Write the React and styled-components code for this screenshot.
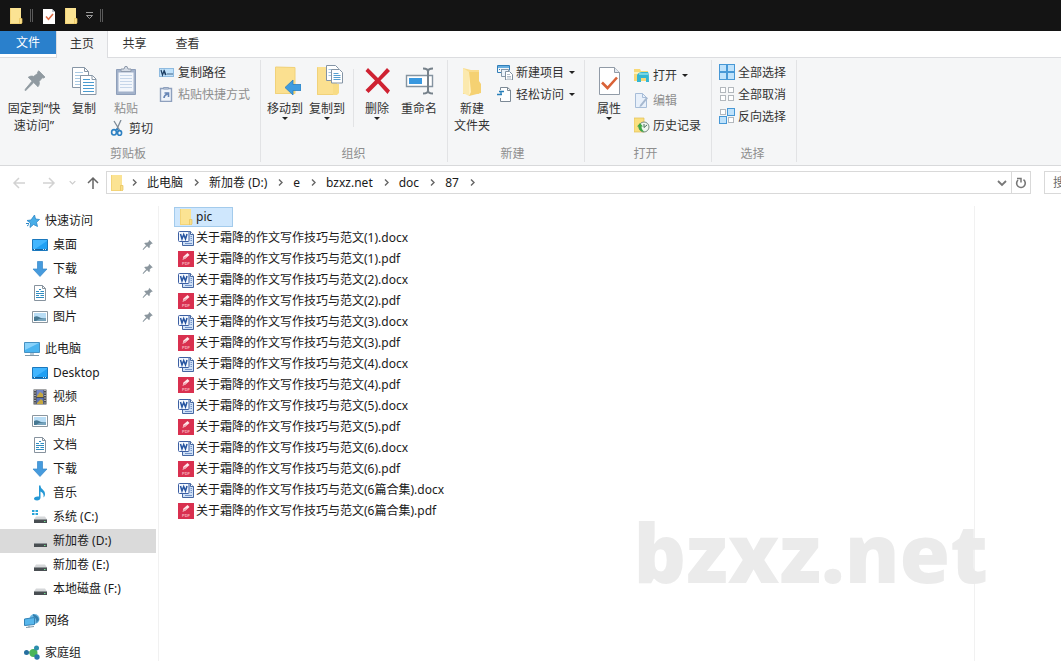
import React from "react";
import styled, { createGlobalStyle, css } from "styled-components";

const GlobalStyle = createGlobalStyle`
  * { box-sizing: border-box; }
  body {
    margin: 0;
    background: #fff;
    color: #1a1a1a;
    font-family: "Noto Sans", "Noto Sans CJK SC", sans-serif;
    font-size: 12px;
    line-height: 17px;
  }
  button, input { font: inherit; color: inherit; }
  svg { display: block; flex: none; }
  ul, ol { list-style: none; margin: 0; padding: 0; }
`;

const resetButton = css`
  border: 0;
  margin: 0;
  padding: 0;
  background: none;
  cursor: default;
  white-space: nowrap;
`;

const Window = styled.div`
  display: flex;
  flex-direction: column;
  height: 100vh;
  overflow: hidden;
`;

const TitleBar = styled.header`
  display: flex;
  align-items: center;
  height: 31px;
  padding-left: 8px;
  background: #141414;
  flex: none;
`;

const TitleButton = styled.button`
  ${resetButton}
  display: flex;
  justify-content: center;
  width: ${(p) => p.$width || 22}px;
`;

const TitleDivider = styled.span`
  width: 3px;
  height: 13px;
  border: solid #5a5a5a;
  border-width: 0 1px;
  margin: 0 ${(p) => p.$after || 0}px 0 6px;
`;

const Tabs = styled.nav`
  display: flex;
  height: 27px;
  border-bottom: 1px solid #dcdde0;
  flex: none;
`;

const Tab = styled.button`
  ${resetButton}
  width: 53px;
  height: 25px;
  color: #333;
  ${(p) =>
    p.$active &&
    css`
      width: 52px;
      height: 27px;
      padding-bottom: 2px;
      background: #f5f6f7;
      border: solid #dcdde0;
      border-width: 0 1px;
    `}
  ${(p) =>
    p.$file &&
    css`
      width: 56px;
      height: 23px;
      background: #2a80cc;
      color: #fff;
    `}
`;

const Ribbon = styled.section`
  display: flex;
  background: #f5f6f7;
  border-bottom: 1px solid #d8d9db;
  padding: 2px 0 3px;
  flex: none;
`;

const Group = styled.section`
  display: flex;
  flex-direction: column;
  border-right: 1px solid #e2e3e5;
  padding: 1px ${(p) => p.$right || 0}px 0 ${(p) => p.$left || 0}px;
`;

const GroupBody = styled.div`
  display: flex;
  align-items: flex-start;
  min-height: 85px;
`;

const GroupLabel = styled.div`
  text-align: center;
  line-height: 16px;
  color: #8e8e8e;
`;

const BigButton = styled.button`
  ${resetButton}
  display: flex;
  flex-direction: column;
  align-items: center;
  width: ${(p) => p.$width}px;
  padding-top: 4px;
  color: ${(p) => (p.$muted ? "#8e8e8e" : "#333")};
`;

const BigLabel = styled.span`
  margin-top: 3px;
  text-align: center;
`;

const Column = styled.div`
  display: flex;
  flex-direction: column;
  align-items: flex-start;
  gap: ${(p) => p.$gap || 0}px;
  padding: ${(p) => p.$top || 0}px 0 0 ${(p) => p.$left || 0}px;
`;

const SmallButton = styled.button`
  ${resetButton}
  display: flex;
  align-items: center;
  gap: 3px;
  height: 22px;
  color: ${(p) => (p.$muted ? "#8e8e8e" : "#333")};
`;

const Caret = styled.span`
  border: 3px solid transparent;
  border-top-color: #222;
  border-bottom: 0;
  margin-left: ${(p) => p.$left || 0}px;
`;

const InnerDivider = styled.span`
  width: 1px;
  height: 58px;
  margin: 8px 5px 0;
  background: #e2e3e5;
`;

const AddressRow = styled.div`
  display: flex;
  align-items: center;
  height: 33px;
  flex: none;
`;

const NavButton = styled.button`
  ${resetButton}
  display: flex;
  justify-content: center;
  width: ${(p) => p.$width}px;
`;

const NavButtons = styled.div`
  display: flex;
  align-items: center;
  width: 106px;
  padding-left: 4px;
`;

const AddressBox = styled.div`
  display: flex;
  align-items: center;
  flex: 1;
  height: 23px;
  border: 1px solid #d9d9d9;
  padding-left: 2px;
`;

const Crumbs = styled.ol`
  display: flex;
  flex: 1;
  padding-left: 4px;
`;

const Crumb = styled.li`
  display: flex;
  align-items: center;
`;

const CrumbLink = styled.a`
  padding: 0 8px 0 7px;
  color: #1a1a1a;
  text-decoration: none;
`;

const RefreshButton = styled(NavButton)`
  align-items: center;
  height: 21px;
  margin-left: 3px;
  border-left: 1px solid #d9d9d9;
`;

const Search = styled.input`
  width: 17px;
  height: 23px;
  margin-left: 13px;
  padding: 0 0 0 8px;
  border: solid #d9d9d9;
  border-width: 1px 0 1px 1px;
  border-radius: 0;
  outline: 0;
  &::placeholder { color: #6d6d6d; opacity: 1; }
`;

const Main = styled.main`
  position: relative;
  display: flex;
  flex: 1;
  min-height: 0;
  padding-top: 7px;
`;

const Sidebar = styled.nav`
  width: 159px;
  padding: 3px 2px 0 0;
  border-right: 1px solid #f1f1f1;
  flex: none;
`;

const TreeSection = styled.ul`
  margin-bottom: 8px;
`;

const TreeItem = styled.a`
  display: flex;
  align-items: center;
  gap: 5px;
  height: 24px;
  padding: 0 0 1px ${(p) => (p.$child ? 32 : 24)}px;
  background: ${(p) => (p.$selected ? "#dadada" : "transparent")};
  color: #1a1a1a;
  text-decoration: none;
  white-space: nowrap;
`;

const TreeText = styled.span`
  flex: 1;
`;

const Files = styled.ul`
  flex: 1;
  padding: 1px 0 0 15px;
`;

const FileRow = styled.li`
  height: 21px;
`;

const FileLink = styled.a`
  display: inline-flex;
  align-items: center;
  gap: 2px;
  height: 20px;
  padding: 0 20px 0 3px;
  border: 1px solid ${(p) => (p.$selected ? "#a3cbec" : "transparent")};
  background: ${(p) => (p.$selected ? "#cfe7fd" : "transparent")};
  color: #1a1a1a;
  line-height: 16px;
  text-decoration: none;
  white-space: nowrap;
`;

const Preview = styled.aside`
  width: 87px;
  border-left: 1px solid #f1f1f1;
  flex: none;
`;

const Watermark = styled.div`
  position: absolute;
  right: 73px;
  bottom: 60px;
  font-family: "Open Sans", sans-serif;
  font-weight: 800;
  font-size: 82px;
  line-height: 100px;
  color: #ebebeb;
  pointer-events: none;
`;

/* ---------- icons ---------- */

const Icon = ({ size = 16, box, children }) => (
  <svg width={size} height={size} viewBox={`0 0 ${box || size} ${box || size}`} fill="none" aria-hidden="true">
    {children}
  </svg>
);

const FolderIcon = () => (
  <Icon>
    <path d="M2 0h11v16H2z" fill="#fbe393" />
    <path d="M2 0h1v16H2zM2 15h9v1H2z" fill="#f3d478" />
    <path d="M11.500 10.500H14V15l-1 1h-1.500z" fill="#f9df8a" stroke="#e6c25a" strokeWidth=".7" />
  </Icon>
);

const CheckPageIcon = () => (
  <Icon>
    <path d="M2 1h9l3 3v12H2z" fill="#fff" />
    <path d="M11 1v3h3z" fill="#bfc6cf" />
    <path d="m5 8.500 2.500 2.700L12 6" stroke="#dd6b44" strokeWidth="1.600" />
  </Icon>
);

const QuickMenuIcon = () => (
  <Icon size={9}>
    <path d="M1 1.500h7M1.500 4.500h6l-3 3z" stroke="#aaa" strokeWidth=".9" />
  </Icon>
);

const pinPath =
  "M20.500 3.500 28 11l-1.200 1.300-1.900-.4-4 4.600c.6 2.400.2 4.600-1.400 6.400l-5.200-5.100L5 27l-1.300.4.3-1.500 8.300-9.900-4.700-4.700c2-1.500 4.400-1.800 6.500-1l5.200-3.800-.3-1.700z";

const BigPinIcon = () => (
  <Icon size={32}>
    <path d={pinPath} transform="translate(4 3) scale(.82)" fill="#909aa1" stroke="#909aa1" />
  </Icon>
);

const PinIcon = () => (
  <Icon box={32}>
    <path d={pinPath} transform="translate(3 4) scale(.78)" fill="#8b969e" stroke="#8b969e" />
  </Icon>
);

const PagePair = ({ blue }) => (
  <>
    <path d="M4.500 2.500h12l4 4v16h-16z" fill="#fff" stroke="#8796a6" />
    <path d="M16.500 2.500v4h4" stroke="#8796a6" />
    <path d="M7 7.500h8M7 10.500h8M7 13.500h8M7 16.500h8M7 19.500h5" stroke="#a9c9e2" />
    <path d="M12.500 10.500h12l3.500 3.500v15.500h-15.500z" fill="#fff" stroke="#8796a6" />
    <path d="M24 10.500v4h4" stroke="#8796a6" />
    <path d="M15 14.500h7M15 17.500h11M15 20.500h11M15 23.500h11M15 26.500h11" stroke={blue} />
  </>
);

const CopyIcon = () => (
  <Icon size={32}>
    <PagePair blue="#4a9bd0" />
  </Icon>
);

const PasteIcon = () => (
  <Icon size={32}>
    <path d="M6.500 4.500h19v25h-19z" fill="#a3b2ca" stroke="#8e9fba" />
    <path d="M8.500 7.500h15v19h-15z" fill="#f3f7fc" />
    <path d="M11 6.500V4h3l1-2.500h2L18 4h3v2.500z" fill="#d4dbe5" stroke="#8e9aab" />
    <path d="M10 10.500h12M10 13.500h12M10 16.500h12M10 19.500h12M10 22.500h12" stroke="#c6d6e9" />
  </Icon>
);

const CutIcon = () => (
  <Icon>
    <path d="M4 1 9.500 10M11 0 6.500 10" stroke="#7d8a96" strokeWidth="1.300" />
    <ellipse cx="4" cy="12.300" rx="2.400" ry="2.700" stroke="#2d80c2" strokeWidth="1.600" />
    <ellipse cx="9.600" cy="13" rx="2" ry="2.400" stroke="#2d80c2" strokeWidth="1.600" />
    <path d="m5.500 10 1.500-1 1.500 1.500" stroke="#2d80c2" strokeWidth="1.400" />
  </Icon>
);

const PathIcon = () => (
  <Icon>
    <rect x=".5" y="4.500" width="14" height="8" fill="#bfe1fa" stroke="#8fbbe0" />
    <path d="m2 6 1.500 5L5 7l1.500 4M5 6l2 5" stroke="#1d3e63" strokeWidth="1.200" />
    <path d="M8.500 10h1M10.500 10h1M12.500 10h1" stroke="#1d3e63" strokeWidth="1.300" />
  </Icon>
);

const PasteShortcutIcon = () => (
  <Icon>
    <path d="M1.500 2.500h11v13h-11z" fill="#eef3fa" stroke="#8ea0bd" strokeWidth="1.400" />
    <path d="M4.500 3V1.500h5V3z" fill="#cbd5e4" stroke="#8ea0bd" />
    <path d="M5 12c0-2 .8-3 3.500-4M5.500 7h4v4" stroke="#6484b5" strokeWidth="1.600" />
  </Icon>
);

const MoveToIcon = () => (
  <Icon size={32}>
    <path d="M6 2h20v27H6z" fill="#fbe090" />
    <path d="M6.500 2v26.500H26V2.500z" stroke="#f1d27a" />
    <path d="M22 19h4v10h-4z" fill="#f6d574" />
    <path d="m16 22.500 8-7.500v4.500h8v6h-8V30z" fill="#3e9ce0" stroke="#287fc0" strokeWidth=".8" />
  </Icon>
);

const CopyToIcon = () => (
  <Icon size={32}>
    <path d="M6 2h20v28H6z" fill="#fbe090" />
    <path d="M6.500 2.500v27H26" stroke="#f1d27a" />
    <path d="M22 19h6v9l-2 2h-4z" fill="#f8dc85" />
    <path d="M15.500.500h9l3 3v12h-12z" fill="#fff" stroke="#8494a5" />
    <path d="M17.500 4.500h5M17.500 7.500h6M17.500 10.500h5" stroke="#9fc5e2" />
    <path d="M20.500 4.500h8l3 3v10.500h-11z" fill="#fff" stroke="#8494a5" />
    <path d="M22.500 8.500h5M22.500 10.500h7M22.500 12.500h7M22.500 14.500h7" stroke="#579fd0" />
  </Icon>
);

const DeleteIcon = () => (
  <Icon size={32}>
    <path d="M4.500 6 7 3l10 10L26 3l3 3-9.500 9.500L29 25.500 26.500 29 17 18.500 7.500 28l-3-3 9.500-9.500z" fill="#cf2232" />
  </Icon>
);

const RenameIcon = () => (
  <Icon size={32}>
    <path d="M3.500 10.500h26v11h-26z" fill="#fff" stroke="#8493a0" strokeWidth="1.400" />
    <path d="M6 13h13v6H6z" fill="#3898df" />
    <path d="M20 3.500c3 0 5 .5 5 3v19c0 2-2 3-5 3M30 3.500c-3 0-5 .5-5 3v19c0 2 2 3 5 3" stroke="#76818a" strokeWidth="2" />
  </Icon>
);

const NewFolderIcon = () => (
  <Icon size={32}>
    <path d="m7 3 8 2h8v24H7z" fill="#f9dc8d" />
    <path d="m7 3 6 4v24l-6-3z" fill="#fbe9ae" />
    <path d="M13 7h10v9l2 3v9l-12 3z" fill="#f5d172" />
    <path d="m13 7 2 20-2 4z" fill="#fff0bf" />
  </Icon>
);

const NewItemIcon = () => (
  <Icon>
    <path d="M.5 1.500h12v5M.5 1.500v7h4" stroke="#317eb8" />
    <path d="M1 2h11v2H1z" fill="#68afe0" />
    <path d="M2 5.500h1M4 5.500h1" stroke="#317eb8" />
    <path d="M4.500 5.500h7v7h-7z" fill="#eaf2fa" stroke="#8797a7" />
    <path d="M8.500 7.500h4l3 3v5.500h-7z" fill="#fff" stroke="#8090a0" />
    <path d="M10 10.500h3M10 12.500h4M10 14h4" stroke="#90a1b2" strokeWidth=".7" />
  </Icon>
);

const EasyAccessIcon = () => (
  <Icon>
    <path d="M3.500 12v3.500h10V4l-3-2.500h-7V4" fill="#fff" stroke="#7c8995" />
    <path d="M10.500 1.500v3h3" stroke="#7c8995" />
    <path d="M2 5.500h5M0 8.500h5M4 6v3" stroke="#287fb9" strokeWidth="1.300" />
  </Icon>
);

const PropertiesIcon = () => (
  <Icon size={32}>
    <path d="M6.500 2.500h15l5 5v22h-20z" fill="#fff" stroke="#919ba7" />
    <path d="M21.500 2.500v5h5" fill="#e4e9f0" stroke="#919ba7" />
    <path d="m9 17.500 5.500 5.500L24 12.500" stroke="#d96237" strokeWidth="2.600" />
  </Icon>
);

const OpenIcon = () => (
  <Icon>
    <path d="M0 2h6l1 2h7v10H0z" fill="#f8d977" />
    <path d="M0 5h14v2H0z" fill="#fff1ba" />
    <path d="M3 8c1-2 3-3 5-3h6c1 2 1 4 1 10h-3v-4H7v4H3z" fill="#35b6d2" />
    <path d="M5 7h9" stroke="#8ce0ea" strokeWidth="1.500" />
  </Icon>
);

const EditIcon = () => (
  <Icon>
    <path d="M1.500 1.500h7l4 4v10h-11z" fill="#e8f0fa" stroke="#a7bdd8" />
    <path d="M8.500 1.500v4h4" stroke="#a7bdd8" />
    <path d="m6 13 6.500-8 1.500 1.200-6.500 8-2 .8z" fill="#a6b8cf" />
  </Icon>
);

const HistoryIcon = () => (
  <Icon>
    <path d="M0 1h10v14H0z" fill="#fadf80" stroke="#e1bf53" strokeWidth=".7" />
    <circle cx="10" cy="10" r="5" fill="#edf5ee" stroke="#788c83" />
    <path d="M10 7v3.500l3-2.500" stroke="#4b6a5b" />
    <path d="M3 9.500 6 6l3 3.500H7.500c0 2.500 1 4 3 5-3 .8-6-1.500-6-5z" fill="#3fa845" />
  </Icon>
);

const squares = [[0.5, 0.5], [8.5, 0.5], [0.5, 8.5], [8.5, 8.5]];

const SelectIcon = ({ filled }) => (
  <Icon>
    {squares.map(([x, y], i) => {
      const on = filled.includes(i);
      const inset = on ? 0 : 1;
      return (
        <rect
          key={i}
          x={x + inset}
          y={y + inset}
          width={7 - inset * 2}
          height={7 - inset * 2}
          fill={on ? "#bfe2fb" : "#fff"}
          stroke={on ? "#4798d6" : "#b3b8bd"}
        />
      );
    })}
  </Icon>
);

const StarIcon = () => (
  <Icon>
    <path d="m10.500 2 1 4 4 .5-3 2.800 1 4.200-4-2-3.500 3 .5-4.500-3.500-2.500L7 7z" fill="#47ade8" stroke="#2b87c6" strokeWidth=".8" />
    <path d="M2 10.500h3M3 13l2-1.500" stroke="#2b87c6" />
  </Icon>
);

const DesktopIcon = () => (
  <Icon>
    <path d="M.5 2.500h15v11H.5z" fill="#20a0f4" stroke="#1b78bd" />
    <path d="m1 3 14 0v1L3 12H1z" fill="#42b6ff" />
    <path d="M1 12.500h14" stroke="#15619e" />
    <path d="M2 12.500h1M11 12.500h1M13 12.500h1" stroke="#c8ebff" />
  </Icon>
);

const DownloadIcon = () => (
  <Icon>
    <path d="M5.500.500h5v7.500h4.500L8 15.500 1 8h4.500z" fill="#469bdd" stroke="#3587c9" strokeWidth=".7" />
  </Icon>
);

const DocumentIcon = () => (
  <Icon>
    <path d="M2.500.500h8l3 3v12h-11z" fill="#fff" stroke="#87939e" />
    <path d="M10.500.500v3h3" stroke="#87939e" />
    <path d="M7 4.500h2M4 6.500h3M8.500 6.500h3.500M4 8.500h8M4 10.500h3M8.500 10.500h3.500M4 12.500h8" stroke="#2f8cc0" />
  </Icon>
);

const PictureIcon = () => (
  <Icon>
    <path d="M.5 2.500h15v11H.5z" fill="#fff" stroke="#8b969f" />
    <path d="M2 4h12v8H2z" fill="#b9ddf5" />
    <path d="M2 8c3-2 5 0 7 1l5 .5V12H2z" fill="#477892" />
    <path d="m7 10 7-1v3H4z" fill="#77a4bd" />
  </Icon>
);

const ComputerIcon = () => (
  <Icon>
    <path d="M.5 1.500h15v10H.5z" fill="#4ab4f0" stroke="#4691c2" />
    <path d="M1 2h14L1 9z" fill="#88d2fb" />
    <path d="M6 12h4v2H6z" fill="#b8cad6" />
    <path d="M1 14.500h14" stroke="#7e97a8" />
  </Icon>
);

const VideoIcon = () => (
  <Icon>
    <path d="M1.500.500h13v15h-13z" fill="#4b4c4f" />
    <path d="M4.500 1h7v7h-7z" fill="#7486c5" />
    <path d="M4.500 9h7v6h-7z" fill="#5a72b7" />
    <path d="m5 7 3-4 3 2v3H5zM5 14l4-4 2 2v3H5z" fill="#c6a840" />
    <path d="M3 1v14M13 1v14" stroke="#e5e5e5" strokeWidth="1.200" strokeDasharray="1 1.500" />
  </Icon>
);

const MusicIcon = () => (
  <Icon>
    <path d="M7 .5h1.500c0 4 4.500 4 4.500 8.500 0 1.500-.5 2.500-1.500 3.500.5-3-.5-5-3-6v6c0 2-1.500 3-3.500 3S2 14.500 2 13.500s1.500-2.500 5-2z" fill="#2598d5" />
  </Icon>
);

const DriveIcon = ({ system }) => (
  <Icon>
    <path d="M4 7.500h9l2 3H2z" fill="#d5d7d9" />
    <path d="M2 10h13v4H2z" fill="#494e52" />
    <path d="M2 10.500h13" stroke="#8d9295" />
    <path d="M12 12.500h1.500" stroke="#72e190" />
    {system && <path d="M0 1h2.500v2H0zM3.500 1H6v2H3.500zM0 4h2.500v2H0zM3.500 4H6v2H3.500z" fill="#28a4d9" />}
  </Icon>
);

const NetworkIcon = () => (
  <Icon>
    <circle cx="10.500" cy="6" r="5" fill="#6eb8e2" />
    <path d="M9 1c3 1 6 3 6 6l-3 3c1-3 0-5-3-7z" fill="#347fae" />
    <path d="m.5 6 10-1.500v7L.5 12.500z" fill="#58b7ec" stroke="#3383b7" />
    <path d="m2 14.500 8-1M5 12.500v2" stroke="#8299a8" />
  </Icon>
);

const HomeGroupIcon = () => (
  <Icon>
    <path d="M3 7.500 12 3v9z" fill="#7cb9b0" />
    <circle cx="2.500" cy="7.500" r="2.500" fill="#266f9f" />
    <circle cx="9.500" cy="8" r="4" fill="#48b558" />
    <circle cx="12.500" cy="3" r="2.500" fill="#2c8eac" />
    <circle cx="13" cy="12" r="2.700" fill="#2877a8" />
  </Icon>
);

const WordIcon = () => (
  <Icon>
    <path d="M6.500 1.500h6l3 3v11h-11v-4" fill="#cfe0f6" stroke="#4566a1" />
    <path d="M12.500 1.500v3h3" fill="#fff" stroke="#4566a1" />
    <path d="M12.500 6.500h1.500M12.500 8.500h1.500M12.500 10.500h1.500M7 13.500h7" stroke="#7292c8" />
    <rect x=".5" y="1.500" width="10.500" height="10" rx="1" fill="#f4f8fe" stroke="#3c5fa3" />
    <path d="m2.500 4 1.500 5 1.700-4.500L7.500 9 9 4" stroke="#2553a0" strokeWidth="1.500" />
  </Icon>
);

const PdfIcon = () => (
  <Icon>
    <path d="M0 0h16v16H0z" fill="#d9304f" />
    <path d="m4.500 9 1-3.500L9.500 2l2 2-4 3.500z" fill="#ffe9ec" />
    <path d="m5 8.500 3-3" stroke="#d9304f" strokeWidth=".7" />
    <text x="8" y="14" textAnchor="middle" fontSize="4" fontWeight="700" fontFamily="Liberation Sans, sans-serif" fill="#f6aeb9">
      PDF
    </text>
  </Icon>
);

const ArrowIcon = ({ d, color }) => (
  <Icon size={14}>
    <path d={d} stroke={color} strokeWidth="1.500" />
  </Icon>
);

const ChevronIcon = () => (
  <Icon size={11}>
    <path d="m4 2.500 3 3-3 3" stroke="#666" strokeWidth="1.400" />
  </Icon>
);

const DownChevronIcon = ({ size = 10, color = "#777" }) => (
  <Icon size={size} box={10}>
    <path d="m1 3 4 4 4-4" stroke={color} strokeWidth="1.800" />
  </Icon>
);

const RefreshIcon = () => (
  <Icon size={14}>
    <path d="M9.500 3.700A4.300 4.300 0 1 1 4 4" stroke="#777" strokeWidth="1.600" />
    <path d="M3 2.500h4v4" stroke="#777" strokeWidth="1.500" />
  </Icon>
);

/* ---------- data ---------- */

const crumbs = ["此电脑", "新加卷 (D:)", "e", "bzxz.net", "doc", "87"];

const tree = [
  {
    label: "快速访问",
    icon: <StarIcon />,
    items: [
      { label: "桌面", icon: <DesktopIcon />, pinned: true },
      { label: "下载", icon: <DownloadIcon />, pinned: true },
      { label: "文档", icon: <DocumentIcon />, pinned: true },
      { label: "图片", icon: <PictureIcon />, pinned: true },
    ],
  },
  {
    label: "此电脑",
    icon: <ComputerIcon />,
    items: [
      { label: "Desktop", icon: <DesktopIcon /> },
      { label: "视频", icon: <VideoIcon /> },
      { label: "图片", icon: <PictureIcon /> },
      { label: "文档", icon: <DocumentIcon /> },
      { label: "下载", icon: <DownloadIcon /> },
      { label: "音乐", icon: <MusicIcon /> },
      { label: "系统 (C:)", icon: <DriveIcon system /> },
      { label: "新加卷 (D:)", icon: <DriveIcon />, selected: true },
      { label: "新加卷 (E:)", icon: <DriveIcon /> },
      { label: "本地磁盘 (F:)", icon: <DriveIcon /> },
    ],
  },
  { label: "网络", icon: <NetworkIcon />, items: [] },
  { label: "家庭组", icon: <HomeGroupIcon />, items: [] },
];

const files = ["1", "2", "3", "4", "5", "6", "6篇合集"].flatMap((n) =>
  ["docx", "pdf"].map((type) => ({ type, name: `关于霜降的作文写作技巧与范文(${n}).${type}` }))
);

/* ---------- parts ---------- */

const Big = ({ icon, lines, width, muted, caret }) => (
  <BigButton $width={width} $muted={muted}>
    {icon}
    <BigLabel>
      {lines.map((line, i) => (
        <React.Fragment key={line}>
          {i > 0 && <br />}
          {line}
        </React.Fragment>
      ))}
    </BigLabel>
    {caret && <Caret />}
  </BigButton>
);

const Small = ({ icon, label, muted, caret }) => (
  <SmallButton $muted={muted}>
    {icon}
    {label}
    {caret && <Caret $left={2} />}
  </SmallButton>
);

export default function App() {
  return (
    <Window>
      <GlobalStyle />
      <TitleBar>
        <TitleButton $width={16} aria-label="文件夹"><FolderIcon /></TitleButton>
        <TitleDivider $after={8} />
        <TitleButton $width={16} aria-label="属性"><CheckPageIcon /></TitleButton>
        <TitleButton $width={28} aria-label="新建文件夹"><FolderIcon /></TitleButton>
        <TitleButton $width={9} aria-label="自定义快速访问工具栏"><QuickMenuIcon /></TitleButton>
        <TitleDivider />
      </TitleBar>

      <Tabs>
        <Tab $file>文件</Tab>
        <Tab $active>主页</Tab>
        <Tab>共享</Tab>
        <Tab>查看</Tab>
      </Tabs>

      <Ribbon>
        <Group $left={6} $right={10}>
          <GroupBody>
            <Big icon={<BigPinIcon />} lines={["固定到“快", "速访问”"]} width={56} />
            <Big icon={<CopyIcon />} lines={["复制"]} width={44} />
            <Column $left={4}>
              <Big icon={<PasteIcon />} lines={["粘贴"]} width={32} muted />
              <Small icon={<CutIcon />} label="剪切" />
            </Column>
            <Column $left={6}>
              <Small icon={<PathIcon />} label="复制路径" />
              <Small icon={<PasteShortcutIcon />} label="粘贴快捷方式" muted />
            </Column>
          </GroupBody>
          <GroupLabel>剪贴板</GroupLabel>
        </Group>

        <Group $left={3} $right={4}>
          <GroupBody>
            <Big icon={<MoveToIcon />} lines={["移动到"]} width={42} caret />
            <Big icon={<CopyToIcon />} lines={["复制到"]} width={42} caret />
            <InnerDivider />
            <Big icon={<DeleteIcon />} lines={["删除"]} width={36} caret />
            <Big icon={<RenameIcon />} lines={["重命名"]} width={48} />
          </GroupBody>
          <GroupLabel>组织</GroupLabel>
        </Group>

        <Group $left={2} $right={9}>
          <GroupBody>
            <Big icon={<NewFolderIcon />} lines={["新建", "文件夹"]} width={44} />
            <Column $left={3}>
              <Small icon={<NewItemIcon />} label="新建项目" caret />
              <Small icon={<EasyAccessIcon />} label="轻松访问" caret />
            </Column>
          </GroupBody>
          <GroupLabel>新建</GroupLabel>
        </Group>

        <Group $left={5} $right={10}>
          <GroupBody>
            <Big icon={<PropertiesIcon />} lines={["属性"]} width={38} caret />
            <Column $left={6} $top={3} $gap={3}>
              <Small icon={<OpenIcon />} label="打开" caret />
              <Small icon={<EditIcon />} label="编辑" muted />
              <Small icon={<HistoryIcon />} label="历史记录" />
            </Column>
          </GroupBody>
          <GroupLabel>打开</GroupLabel>
        </Group>

        <Group $left={7} $right={10}>
          <GroupBody>
            <Column>
              <Small icon={<SelectIcon filled={[0, 1, 2, 3]} />} label="全部选择" />
              <Small icon={<SelectIcon filled={[]} />} label="全部取消" />
              <Small icon={<SelectIcon filled={[1, 2]} />} label="反向选择" />
            </Column>
          </GroupBody>
          <GroupLabel>选择</GroupLabel>
        </Group>
      </Ribbon>

      <AddressRow>
        <NavButtons>
          <NavButton $width={30} aria-label="后退"><ArrowIcon d="M13 7H2M7 2 2 7l5 5" color="#d2d2d2" /></NavButton>
          <NavButton $width={30} aria-label="前进"><ArrowIcon d="M1 7h11M7 2l5 5-5 5" color="#d2d2d2" /></NavButton>
          <NavButton $width={16} aria-label="最近位置"><DownChevronIcon size={7} color="#ccc" /></NavButton>
          <NavButton $width={26} aria-label="上移"><ArrowIcon d="M7 13V2M2 7l5-5 5 5" color="#666" /></NavButton>
        </NavButtons>
        <AddressBox>
          <FolderIcon />
          <Crumbs>
            <Crumb><ChevronIcon /></Crumb>
            {crumbs.map((crumb) => (
              <Crumb key={crumb}>
                <CrumbLink href="#">{crumb}</CrumbLink>
                <ChevronIcon />
              </Crumb>
            ))}
          </Crumbs>
          <NavButton $width={12} aria-label="展开地址"><DownChevronIcon /></NavButton>
          <RefreshButton $width={19} aria-label="刷新"><RefreshIcon /></RefreshButton>
        </AddressBox>
        <Search type="text" placeholder="搜索" aria-label="搜索" />
      </AddressRow>

      <Main>
        <Sidebar>
          {tree.map((section) => (
            <TreeSection key={section.label}>
              <li>
                <TreeItem href="#">
                  {section.icon}
                  <TreeText>{section.label}</TreeText>
                </TreeItem>
              </li>
              {section.items.map((item) => (
                <li key={item.label}>
                  <TreeItem href="#" $child $selected={item.selected}>
                    {item.icon}
                    <TreeText>{item.label}</TreeText>
                    {item.pinned && <PinIcon />}
                  </TreeItem>
                </li>
              ))}
            </TreeSection>
          ))}
        </Sidebar>
        <Watermark>bzxz.net</Watermark>
        <Files>
          <FileRow>
            <FileLink href="#" $selected>
              <FolderIcon />
              pic
            </FileLink>
          </FileRow>
          {files.map((file) => (
            <FileRow key={file.name}>
              <FileLink href="#">
                {file.type === "docx" ? <WordIcon /> : <PdfIcon />}
                {file.name}
              </FileLink>
            </FileRow>
          ))}
        </Files>
        <Preview />
      </Main>
    </Window>
  );
}
